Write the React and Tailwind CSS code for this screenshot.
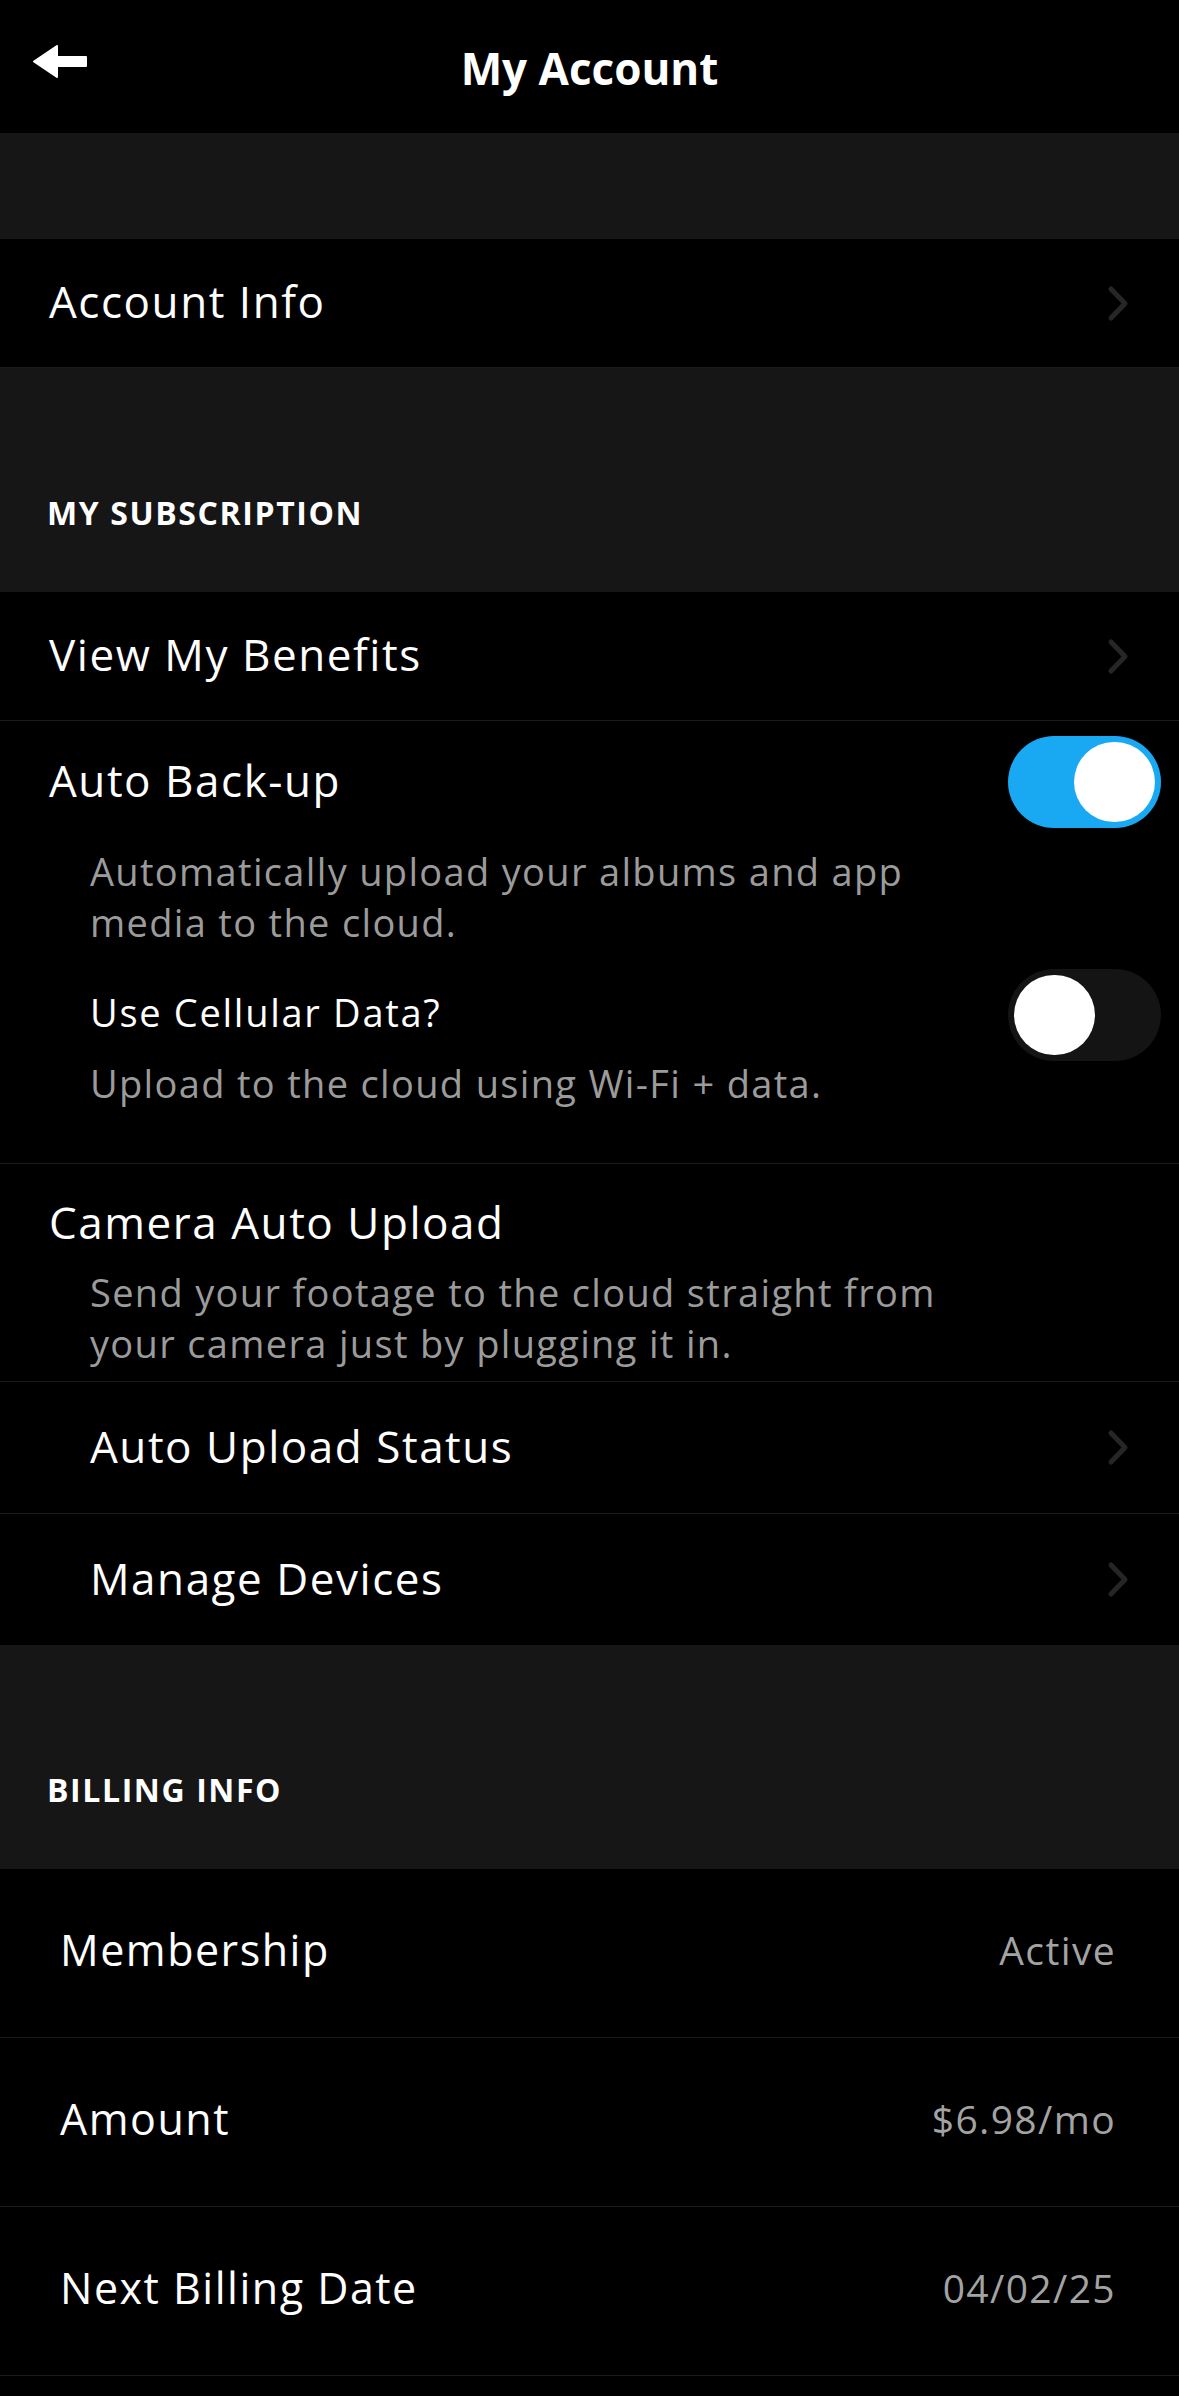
import React from "react";

const font = { fontFamily: '"Open Sans", "Liberation Sans", sans-serif' };

function Chevron() {
  return (
    <svg width="22" height="37" viewBox="0 0 22 37" className="shrink-0">
      <polyline points="4,4 18,18.5 4,33" fill="none" stroke="#262626" strokeWidth="5" strokeLinecap="round" strokeLinejoin="round" />
    </svg>
  );
}

function Toggle({ on }) {
  return (
    <div className={`w-[153px] h-[92px] rounded-full p-[6px] flex shrink-0 ${on ? "bg-[#19a9f3] justify-end" : "bg-[#141414] justify-start"}`}>
      <div className="w-[81px] h-[80px] rounded-full bg-white" />
    </div>
  );
}

function NavRow({ label, indent, height, last }) {
  return (
    <div className={`flex items-center justify-between ${height} ${indent ? "pl-[90px]" : "pl-[49px]"} pr-[50px] ${last ? "" : "border-b border-[#1b1b1b]"}`}>
      <span className="text-[44px] leading-none text-white tracking-[0.035em] pb-[4px]">{label}</span>
      <Chevron />
    </div>
  );
}

function SectionHeader({ title }) {
  return (
    <div className="bg-[#161616] h-[224px] flex items-end pl-[47px] pb-[63px]">
      <span className="text-[32px] leading-[32px] font-bold text-white tracking-[0.05em]">{title}</span>
    </div>
  );
}

function BillingRow({ label, value }) {
  return (
    <div className="flex items-center justify-between h-[169px] pl-[60px] pr-[63px] border-b border-[#1b1b1b]">
      <span className="text-[43px] leading-none text-white tracking-[0.035em] pb-[8px]">{label}</span>
      <span className="text-[39px] leading-none text-[#a3a3a3] tracking-[0.035em] pb-[8px]">{value}</span>
    </div>
  );
}

export default function App() {
  return (
    <div className="w-[1179px] min-h-[2396px] bg-black text-white" style={font}>
      {/* header */}
      <div className="h-[133px] grid grid-cols-[1fr_auto_1fr] items-center">
        <div className="pl-[33px] self-start pt-[45px]">
          <svg width="54" height="33" viewBox="0 0 54 33">
            <path d="M1 16.5 L24 1 L24 12 L53 12 L53 21 L24 21 L24 32 Z" fill="white" stroke="white" strokeWidth="2" strokeLinejoin="round" />
          </svg>
        </div>
        <div className="text-[44px] font-bold leading-none pt-[2px]">My Account</div>
        <div />
      </div>

      <div className="bg-[#161616] h-[106px]" />

      <NavRow label="Account Info" height="h-[129px]" />

      <SectionHeader title="MY SUBSCRIPTION" />

      <NavRow label="View My Benefits" height="h-[129px]" />

      {/* auto back-up */}
      <div className="pt-[15px] pb-[54px] border-b border-[#1b1b1b]">
        <div className="flex items-center justify-between pl-[49px] pr-[18px]">
          <span className="text-[44px] leading-none tracking-[0.035em] pb-[4px]">Auto Back-up</span>
          <Toggle on />
        </div>
        <p className="mt-[18px] pl-[90px] w-[970px] text-[38px] leading-[51px] text-[#9b9b9b] tracking-[0.035em]">
          Automatically upload your albums and app media to the cloud.
        </p>
        <div className="mt-[21px] flex items-start justify-between pl-[90px] pr-[18px]">
          <div className="mt-[18px]">
            <div className="text-[38px] leading-[51px] tracking-[0.045em]">Use Cellular Data?</div>
            <div className="mt-[20px] text-[38px] leading-[51px] text-[#9b9b9b] tracking-[0.035em]">
              Upload to the cloud using Wi-Fi + data.
            </div>
          </div>
          <Toggle on={false} />
        </div>
      </div>

      {/* camera auto upload */}
      <div className="pt-[28px] pb-[12px] border-b border-[#1b1b1b]">
        <div className="pl-[49px] text-[44px] leading-[60px] tracking-[0.035em]">Camera Auto Upload</div>
        <p className="mt-[15px] pl-[90px] w-[970px] text-[38px] leading-[51px] text-[#9b9b9b] tracking-[0.035em]">
          Send your footage to the cloud straight from your camera just by plugging it in.
        </p>
      </div>

      <NavRow label="Auto Upload Status" indent height="h-[132px]" />
      <NavRow label="Manage Devices" indent height="h-[131px]" last />

      <SectionHeader title="BILLING INFO" />

      <BillingRow label="Membership" value="Active" />
      <BillingRow label="Amount" value="$6.98/mo" />
      <BillingRow label="Next Billing Date" value="04/02/25" />
    </div>
  );
}
